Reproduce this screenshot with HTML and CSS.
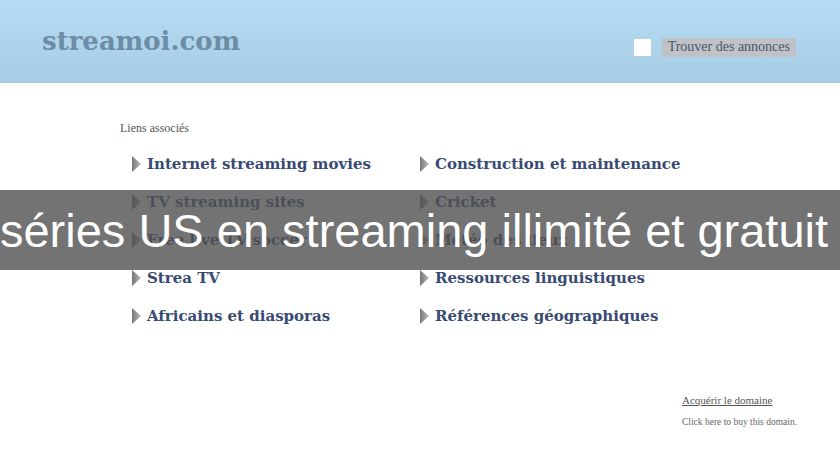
FILE: index.html
```html
<!DOCTYPE html>
<html lang="fr">
<head>
    <meta charset="UTF-8">
    <title>streamoi.com</title>
    <link rel="stylesheet" href="styles.css">
</head>
<body>

<header class="top">
    <div class="logo">streamoi.com</div>
    <div class="search">
        <span class="search-box"></span>
        <span class="search-btn">Trouver des annonces</span>
    </div>
</header>

<main class="content">
    <div class="related">Liens associés</div>
    <ul class="links">
        <li><a href="#">Internet streaming movies</a></li>
        <li><a href="#">Construction et maintenance</a></li>
        <li><a href="#">TV streaming sites</a></li>
        <li><a href="#">Cricket</a></li>
        <li><a href="#">Free live TV soccer</a></li>
        <li><a href="#">Météo des lieux</a></li>
        <li><a href="#">Strea TV</a></li>
        <li><a href="#">Ressources linguistiques</a></li>
        <li><a href="#">Africains et diasporas</a></li>
        <li><a href="#">Références géographiques</a></li>
    </ul>
    <div class="buy">
        <a href="#">Acquérir le domaine</a>
        <p>Click here to buy this domain.</p>
    </div>
</main>

<div class="banner">séries US en streaming illimité et gratuit</div>

</body>
</html>
```

FILE: styles.css
```css
body {
    margin: 0;
    font-family: "DejaVu Serif", "Liberation Serif", serif;
    background: #fff;
}

.top {
    height: 83px;
    display: flex;
    align-items: center;
    justify-content: space-between;
    padding: 0 44px 0 42px;
    background: linear-gradient(#b6ddf3, #a7cce5);
}

.logo {
    font-size: 26px;
    font-weight: bold;
    color: #6d8ca6;
    margin-top: -2px;
}

.search {
    display: flex;
    align-items: center;
    gap: 11px;
    margin-top: 12px;
}

.search-box {
    width: 17px;
    height: 17px;
    background: #fff;
}

.search-btn {
    background: #bfc3c7;
    color: #4b566b;
    font-family: "Liberation Serif", serif;
    font-size: 14px;
    padding: 1px 6px 2px;
}

.content {
    padding: 38px 0 0 120px;
}

.related {
    font-family: "Liberation Serif", serif;
    font-size: 12px;
    color: #555;
}

.links {
    list-style: none;
    margin: 18px 0 0 12px;
    padding: 0;
    display: grid;
    grid-template-columns: 288px 300px;
    row-gap: 18px;
}

.links li {
    display: flex;
    align-items: center;
    gap: 6px;
    height: 20px;
}

.links li::before {
    content: "";
    width: 9px;
    height: 16px;
    background: linear-gradient(90deg, #777, #bbb);
    clip-path: polygon(0 0, 100% 50%, 0 100%);
}

.links a {
    font-size: 15px;
    font-weight: bold;
    color: #384a72;
    text-decoration: none;
}

.buy {
    margin: 68px 0 0 562px;
    font-family: "Liberation Serif", serif;
    font-size: 11px;
    color: #666;
}

.buy a {
    color: #555;
    text-decoration: underline;
}

.buy p {
    margin: 11px 0 0;
    font-size: 9.5px;
}

.banner {
    position: absolute;
    top: 190px;
    left: 0;
    right: 0;
    height: 80px;
    display: flex;
    align-items: center;
    justify-content: center;
    padding-right: 12px;
    background: rgba(80, 80, 80, 0.8);
    color: #fff;
    font-family: "Liberation Sans", Arial, sans-serif;
    font-size: 47px;
    white-space: nowrap;
}
```
